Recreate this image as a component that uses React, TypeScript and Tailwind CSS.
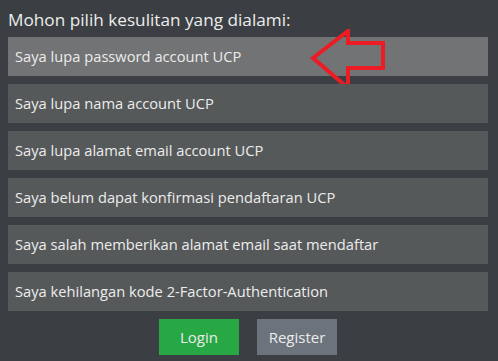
const options = [
  'Saya lupa password account UCP',
  'Saya lupa nama account UCP',
  'Saya lupa alamat email account UCP',
  'Saya belum dapat konfirmasi pendaftaran UCP',
  'Saya salah memberikan alamat email saat mendaftar',
  'Saya kehilangan kode 2-Factor-Authentication',
];

function Arrow() {
  return (
    <svg className="absolute left-[297px] top-[-8px]" width="84" height="56" viewBox="0 0 84 56">
      <polygon
        points="8,21 43,-6 43,6 78,6 78,31 43,31 43,51"
        transform="translate(0,8)"
        fill="none"
        stroke="#ed1c24"
        strokeWidth="4"
        strokeLinejoin="miter"
      />
    </svg>
  );
}

export default function App() {
  return (
    <div className="w-[498px] h-[361px] bg-[#3b3f43] px-2 pt-[8px] font-['Open_Sans',sans-serif] text-[#ececec]">
      <h1 className="text-[17.2px] leading-[24px] mb-[5px]">Mohon pilih kesulitan yang dialami:</h1>
      <div className="flex flex-col gap-2 w-[480px]">
        {options.map((o, i) => (
          <div
            key={o}
            className={
              'relative h-[39px] flex items-center px-[7px] text-[14.7px] ' +
              (i === 0 ? 'bg-[#727374]' : 'bg-[#56595a]')
            }
          >
            {o}
            {i === 0 && <Arrow />}
          </div>
        ))}
      </div>
      <div className="flex justify-center gap-[18px] mt-[8px] pr-[2px]">
        <button className="w-[80px] h-[36px] bg-[#28a745] text-[15px]">Login</button>
        <button className="w-[80px] h-[36px] bg-[#6c737d] text-[15px]">Register</button>
      </div>
    </div>
  );
}
